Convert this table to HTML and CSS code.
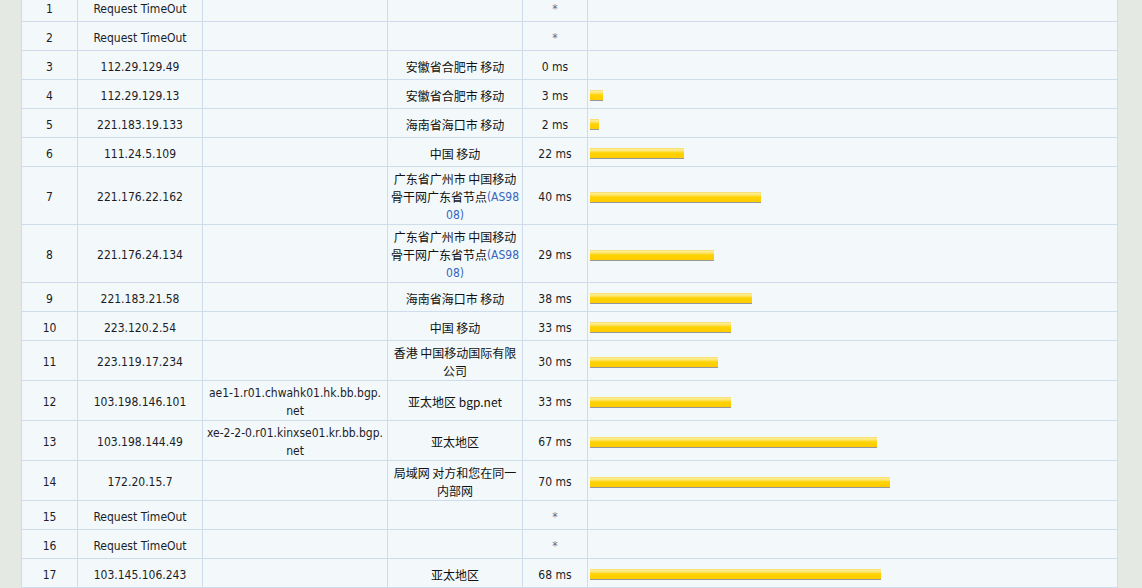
FILE: index.html
```html
<!DOCTYPE html>
<html lang="zh-CN">
<head>
<meta charset="utf-8">
<title>Traceroute</title>
<link rel="stylesheet" href="styles.css">
</head>
<body>
<div class="page">
<table class="trace">
<colgroup>
<col class="c-hop"><col class="c-ip"><col class="c-host"><col class="c-loc"><col class="c-time"><col class="c-bar">
</colgroup>
<tbody>
<tr><td>1</td><td>Request TimeOut</td><td></td><td></td><td class="star">*</td><td class="bar-cell"></td></tr>
<tr><td>2</td><td>Request TimeOut</td><td></td><td></td><td class="star">*</td><td class="bar-cell"></td></tr>
<tr><td>3</td><td>112.29.129.49</td><td></td><td class="loc">安徽省合肥市 移动</td><td>0 ms</td><td class="bar-cell"></td></tr>
<tr><td>4</td><td>112.29.129.13</td><td></td><td class="loc">安徽省合肥市 移动</td><td>3 ms</td><td class="bar-cell"><div class="bar" style="width:13px"></div></td></tr>
<tr><td>5</td><td>221.183.19.133</td><td></td><td class="loc">海南省海口市 移动</td><td>2 ms</td><td class="bar-cell"><div class="bar" style="width:9px"></div></td></tr>
<tr><td>6</td><td>111.24.5.109</td><td></td><td class="loc">中国 移动</td><td>22 ms</td><td class="bar-cell"><div class="bar" style="width:94px"></div></td></tr>
<tr><td>7</td><td>221.176.22.162</td><td></td><td class="loc">广东省广州市 中国移动<br>骨干网广东省节点<span class="asn">(AS98</span><br><span class="asn">08)</span></td><td>40 ms</td><td class="bar-cell"><div class="bar" style="width:171px"></div></td></tr>
<tr><td>8</td><td>221.176.24.134</td><td></td><td class="loc">广东省广州市 中国移动<br>骨干网广东省节点<span class="asn">(AS98</span><br><span class="asn">08)</span></td><td>29 ms</td><td class="bar-cell"><div class="bar" style="width:124px"></div></td></tr>
<tr><td>9</td><td>221.183.21.58</td><td></td><td class="loc">海南省海口市 移动</td><td>38 ms</td><td class="bar-cell"><div class="bar" style="width:162px"></div></td></tr>
<tr><td>10</td><td>223.120.2.54</td><td></td><td class="loc">中国 移动</td><td>33 ms</td><td class="bar-cell"><div class="bar" style="width:141px"></div></td></tr>
<tr><td>11</td><td>223.119.17.234</td><td></td><td class="loc">香港 中国移动国际有限<br>公司</td><td>30 ms</td><td class="bar-cell"><div class="bar" style="width:128px"></div></td></tr>
<tr><td>12</td><td>103.198.146.101</td><td class="host">ae1-1.r01.chwahk01.hk.bb.bgp.<br>net</td><td class="loc">亚太地区 bgp.net</td><td>33 ms</td><td class="bar-cell"><div class="bar" style="width:141px"></div></td></tr>
<tr><td>13</td><td>103.198.144.49</td><td class="host">xe-2-2-0.r01.kinxse01.kr.bb.bgp.<br>net</td><td class="loc">亚太地区</td><td>67 ms</td><td class="bar-cell"><div class="bar" style="width:287px"></div></td></tr>
<tr><td>14</td><td>172.20.15.7</td><td></td><td class="loc">局域网 对方和您在同一<br>内部网</td><td>70 ms</td><td class="bar-cell"><div class="bar" style="width:300px"></div></td></tr>
<tr><td>15</td><td>Request TimeOut</td><td></td><td></td><td class="star">*</td><td class="bar-cell"></td></tr>
<tr><td>16</td><td>Request TimeOut</td><td></td><td></td><td class="star">*</td><td class="bar-cell"></td></tr>
<tr><td>17</td><td>103.145.106.243</td><td></td><td class="loc">亚太地区</td><td>68 ms</td><td class="bar-cell"><div class="bar" style="width:291px"></div></td></tr>
</tbody>
</table>
</div>
</body>
</html>
```
FILE: styles.css
```css
html, body {
  margin: 0;
  padding: 0;
  background: #e4e9e3;
}

.page {
  padding: 0 24px 0 21px;
  margin-top: -8px;
  overflow: hidden;
  height: 596px;
}

.trace {
  border-collapse: collapse;
  table-layout: fixed;
  width: 1097px;
  background: #f3f9fa;
  font-family: "DejaVu Sans Condensed", "Noto Sans CJK SC", sans-serif;
  font-size: 12px;
  color: #1c1c28;
}

.c-hop { width: 56px; }
.c-ip { width: 125px; }
.c-host { width: 185px; }
.c-loc { width: 135px; }
.c-time { width: 65px; }
.c-bar { width: 530px; }

.trace td {
  border: 1px solid #cfdcec;
  padding: 3px 2px 0;
  height: 25px;
  line-height: 18px;
  text-align: center;
  vertical-align: middle;
  white-space: nowrap;
  overflow: hidden;
}

.trace td.loc {
  font-family: "Noto Sans CJK SC", "DejaVu Sans Condensed", sans-serif;
  color: #111;
}

.trace td.loc .asn {
  font-family: "DejaVu Sans Condensed", sans-serif;
  color: #3565c0;
  vertical-align: top;
  line-height: 18px;
}

.trace td.star {
  color: #5a6f98;
}

.trace td.bar-cell {
  text-align: left;
}

.bar {
  height: 10px;
  margin-top: 0;
  border-bottom: 1px solid #979797;
  background: linear-gradient(#f4cf3a 0, #fff0a0 1px, #ffe46a 3px, #ffd200 5px, #ffcc00 100%);
}
```
